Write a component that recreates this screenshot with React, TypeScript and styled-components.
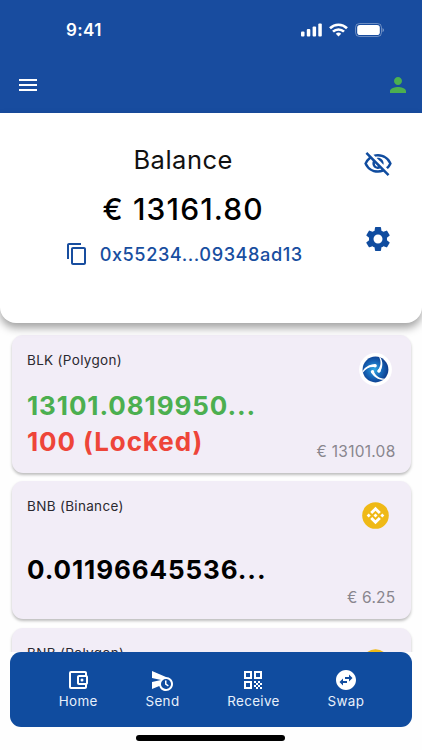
import React from 'react';
import styled, { createGlobalStyle } from 'styled-components';
import {
  MdMenu,
  MdPerson,
  MdContentCopy,
  MdOutlineVisibilityOff,
  MdSettings,
  MdOutlineAccountBalanceWallet,
  MdScheduleSend,
  MdQrCode,
  MdSwapHorizontalCircle,
} from 'react-icons/md';

const GlobalStyle = createGlobalStyle`
  * { box-sizing: border-box; }
  body {
    margin: 0;
    background: #fefefe;
    font-family: "Inter", "Liberation Sans", sans-serif;
  }
  svg { display: block; flex: none; }
`;

const Screen = styled.div`
  width: 422px;
  height: 750px;
  overflow: hidden;
  display: flex;
  flex-direction: column;
  background: #fefefe;
`;

const Header = styled.header`
  flex: none;
  height: 112.7px;
  background: #184c9f;
  color: #fff;
`;

const StatusBar = styled.div`
  height: 58px;
  padding: 1px 38.5px 0 66px;
  display: flex;
  align-items: center;
  justify-content: space-between;
`;

const Clock = styled.span`
  font-size: 17px;
  font-weight: 600;
  letter-spacing: 0.35px;
  line-height: 22px;
`;

const StatusIcons = styled.div`
  display: flex;
  align-items: center;
  gap: 7px;
`;

const AppBar = styled.div`
  height: 54.7px;
  padding: 0 12px 0 15.5px;
  display: flex;
  align-items: center;
  justify-content: space-between;
`;

const PersonIcon = styled(MdPerson)`
  color: #4caf50;
`;

const BalancePanel = styled.section`
  flex: none;
  position: relative;
  z-index: 1;
  height: 210.3px;
  display: flex;
  background: #fff;
  border-radius: 0 0 16px 16px;
  box-shadow: 0 5px 9px rgba(0, 0, 0, 0.36);
`;

const BalanceMain = styled.div`
  width: 363.4px;
  padding: 32.3px 0 0 3px;
  display: flex;
  flex-direction: column;
  align-items: center;
`;

const BalanceTitle = styled.h1`
  margin: 0;
  font-size: 25.5px;
  font-weight: 400;
  line-height: 30px;
  letter-spacing: 0.5px;
  color: #111;
`;

const BalanceAmount = styled.div`
  margin-top: 16px;
  font-size: 30px;
  font-weight: 500;
  line-height: 36px;
  letter-spacing: 1.15px;
  color: #000;
`;

const AddressRow = styled.div`
  margin-top: 15px;
  padding-left: 1px;
  display: flex;
  align-items: center;
  gap: 11px;
  color: #184e9f;
`;

const Address = styled.span`
  font-size: 18.2px;
  font-weight: 500;
  line-height: 24px;
  letter-spacing: 0.54px;
`;

const BalanceActions = styled.div`
  padding-top: 36.3px;
  display: flex;
  flex-direction: column;
  gap: 45px;
  color: #104c9f;
`;

const AssetList = styled.main`
  flex: none;
  height: 328.7px;
  padding: 12px 11px 0 11.5px;
  overflow: hidden;
  display: flex;
  flex-direction: column;
  gap: 8.4px;
`;

const AssetCard = styled.article`
  flex: none;
  height: 138px;
  padding: 16px 15.5px 11.3px 15.5px;
  display: flex;
  justify-content: space-between;
  background: #f2edf7;
  border-radius: 11px;
  box-shadow: 0 2px 3px rgba(0, 0, 0, 0.26);
`;

const AssetInfo = styled.div`
  display: flex;
  flex-direction: column;
`;

const AssetName = styled.div`
  font-size: 13.5px;
  line-height: 18px;
  letter-spacing: 0.32px;
  color: #2b2930;
`;

const AssetValues = styled.div`
  height: 72.6px;
  margin-top: 18.7px;
  display: flex;
  flex-direction: column;
  justify-content: center;
`;

const tones = { green: '#4caf50', red: '#ee4539', black: '#000' };

const AssetValue = styled.div<{ $tone: keyof typeof tones }>`
  font-size: 26px;
  font-weight: 700;
  line-height: 36.3px;
  letter-spacing: 0.9px;
  white-space: nowrap;
  color: ${({ $tone }) => tones[$tone]};
`;

const AssetSide = styled.div`
  padding-top: 1.9px;
  display: flex;
  flex-direction: column;
  align-items: flex-end;
  justify-content: space-between;
`;

const Coin = styled.div`
  width: 33px;
  height: 33px;
  margin-right: 3.2px;
`;

const Fiat = styled.div`
  font-size: 15.5px;
  line-height: 20px;
  letter-spacing: 0.25px;
  color: #89868e;
`;

const NavBar = styled.nav`
  flex: none;
  height: 75.5px;
  margin: 0 10px;
  padding: 16.3px 0 0 1px;
  display: flex;
  justify-content: space-evenly;
  background: #104c9f;
  border-radius: 11px;
  color: #fff;
`;

const NavItem = styled.div`
  display: flex;
  flex-direction: column;
  align-items: center;
`;

const NavLabel = styled.span`
  font-size: 13.4px;
  line-height: 18px;
  letter-spacing: 0.36px;
  color: #e8f0fb;
`;

const HomeIndicator = styled.div`
  flex: none;
  width: 149px;
  height: 5.4px;
  margin: 8.3px 0 0 136px;
  border-radius: 3px;
  background: #000;
`;

const SignalIcon = () => (
  <svg width="21" height="14" viewBox="0 0 21 14" fill="#fff">
    <rect x="0" y="8.6" width="3.5" height="5" rx="1" />
    <rect x="5.8" y="6" width="3.5" height="7.6" rx="1" />
    <rect x="11.6" y="3.4" width="3.5" height="10.2" rx="1" />
    <rect x="17.3" y="0.4" width="3.5" height="13.2" rx="1" />
  </svg>
);

const WifiIcon = () => (
  <svg width="19" height="14" viewBox="0 0 19 14" fill="none" stroke="#fff" strokeWidth="2.6">
    <path d="M1 5.2a12.2 12.2 0 0 1 17 0" />
    <path d="M4 8.7a7.8 7.8 0 0 1 11 0" />
    <path d="M6.8 10.8a3.9 3.9 0 0 1 5.4 0L9.5 13.5z" fill="#fff" stroke="none" />
  </svg>
);

const BatteryIcon = () => (
  <svg width="29" height="14" viewBox="0 0 29 14">
    <rect x="0.5" y="0.5" width="26" height="13" rx="4" fill="none" stroke="#fff" strokeOpacity="0.36" />
    <rect x="2.2" y="2" width="22.6" height="10" rx="2.8" fill="#fff" />
    <path d="M27.6 4.9v4.4c1.6-.8 1.6-3.6 0-4.4z" fill="#fff" fillOpacity="0.5" />
  </svg>
);

const BlkLogo = () => (
  <svg width="33" height="33" viewBox="-16.5 -16.5 33 33">
    <defs>
      <radialGradient id="blkSphere" cx="0.45" cy="0.5" r="0.55">
        <stop offset="0" stopColor="#2fa9e3" />
        <stop offset="0.55" stopColor="#1767b8" />
        <stop offset="1" stopColor="#0d3c8c" />
      </radialGradient>
    </defs>
    <circle r="16.4" fill="#fff" />
    <circle r="12.9" fill="url(#blkSphere)" />
    <g fill="#fff">
      <g id="blkArm">
        <circle cx="-0.4" cy="-3.7" r="1.7" />
        <path d="M-.2-5.2C-6-5.3-10.6-2.6-12.9 1.8l.4 1.3C-9.6-1.4-5.5-3.1-.4-2.4z" />
      </g>
      <use href="#blkArm" transform="rotate(120)" />
      <use href="#blkArm" transform="rotate(240)" />
    </g>
  </svg>
);

const BnbLogo = () => (
  <svg width="33" height="33" viewBox="-16.5 -16.5 33 33">
    <circle r="13.3" fill="#efb916" />
    <g fill="#fff">
      <path d="M0-8.7 5.3-3.4 3.3-1.4 0-4.7-3.3-1.4-5.3-3.4z" />
      <path d="M0 8.7 5.3 3.4 3.3 1.4 0 4.7-3.3 1.4-5.3 3.4z" />
      <path d="M0-2 2 0 0 2-2 0z" />
      <path d="M-6.8-2-4.8 0-6.8 2-8.8 0z" />
      <path d="M6.8-2 8.8 0 6.8 2 4.8 0z" />
    </g>
  </svg>
);

type Asset = {
  name: string;
  logo: React.ReactNode;
  values: { text: string; tone: keyof typeof tones }[];
  fiat?: string;
};

const assets: Asset[] = [
  {
    name: 'BLK (Polygon)',
    logo: <BlkLogo />,
    values: [
      { text: '13101.0819950...', tone: 'green' },
      { text: '100 (Locked)', tone: 'red' },
    ],
    fiat: '€ 13101.08',
  },
  {
    name: 'BNB (Binance)',
    logo: <BnbLogo />,
    values: [{ text: '0.01196645536...', tone: 'black' }],
    fiat: '€ 6.25',
  },
  { name: 'BNB (Polygon)', logo: <BnbLogo />, values: [] },
];

const navItems = [
  { label: 'Home', Icon: MdOutlineAccountBalanceWallet },
  { label: 'Send', Icon: MdScheduleSend },
  { label: 'Receive', Icon: MdQrCode },
  { label: 'Swap', Icon: MdSwapHorizontalCircle },
];

export default function App() {
  return (
    <Screen>
      <GlobalStyle />
      <Header>
        <StatusBar>
          <Clock>9:41</Clock>
          <StatusIcons>
            <SignalIcon />
            <WifiIcon />
            <BatteryIcon />
          </StatusIcons>
        </StatusBar>
        <AppBar>
          <MdMenu size={24} />
          <PersonIcon size={24} />
        </AppBar>
      </Header>
      <BalancePanel>
        <BalanceMain>
          <BalanceTitle>Balance</BalanceTitle>
          <BalanceAmount>€ 13161.80</BalanceAmount>
          <AddressRow>
            <MdContentCopy size={24} />
            <Address>0x55234...09348ad13</Address>
          </AddressRow>
        </BalanceMain>
        <BalanceActions>
          <MdOutlineVisibilityOff size={30} />
          <MdSettings size={30} />
        </BalanceActions>
      </BalancePanel>
      <AssetList>
        {assets.map((asset) => (
          <AssetCard key={asset.name}>
            <AssetInfo>
              <AssetName>{asset.name}</AssetName>
              <AssetValues>
                {asset.values.map((v) => (
                  <AssetValue key={v.text} $tone={v.tone}>{v.text}</AssetValue>
                ))}
              </AssetValues>
            </AssetInfo>
            <AssetSide>
              <Coin>{asset.logo}</Coin>
              {asset.fiat && <Fiat>{asset.fiat}</Fiat>}
            </AssetSide>
          </AssetCard>
        ))}
      </AssetList>
      <NavBar>
        {navItems.map(({ label, Icon }) => (
          <NavItem key={label}>
            <Icon size={24} />
            <NavLabel>{label}</NavLabel>
          </NavItem>
        ))}
      </NavBar>
      <HomeIndicator />
    </Screen>
  );
}
